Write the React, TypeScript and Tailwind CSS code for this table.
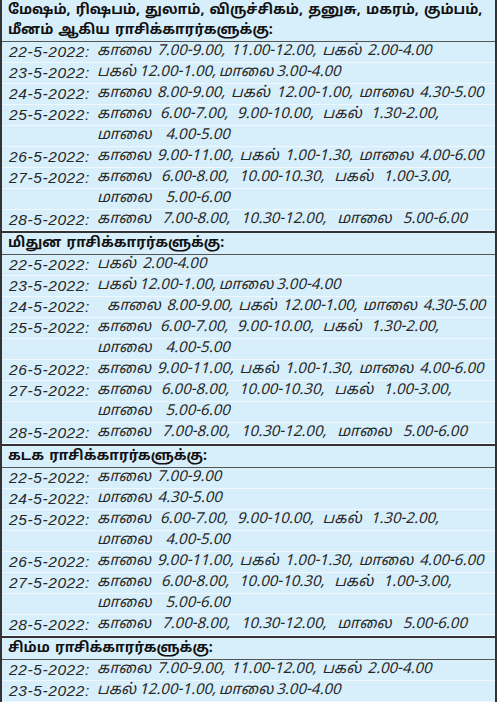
const groups = [
  {
    title: ['மேஷம், ரிஷபம், துலாம், விருச்சிகம், தனுசு, மகரம், கும்பம்,', 'மீனம் ஆகிய ராசிக்காரர்களுக்கு:'],
    rows: [
      { date: '22-5-2022:', lines: ['காலை 7.00-9.00, 11.00-12.00, பகல் 2.00-4.00'] },
      { date: '23-5-2022:', lines: ['பகல் 12.00-1.00, மாலை 3.00-4.00'] },
      { date: '24-5-2022:', lines: ['காலை 8.00-9.00, பகல் 12.00-1.00, மாலை 4.30-5.00'] },
      { date: '25-5-2022:', lines: ['காலை 6.00-7.00, 9.00-10.00, பகல் 1.30-2.00,', 'மாலை 4.00-5.00'] },
      { date: '26-5-2022:', lines: ['காலை 9.00-11.00, பகல் 1.00-1.30, மாலை 4.00-6.00'] },
      { date: '27-5-2022:', lines: ['காலை 6.00-8.00, 10.00-10.30, பகல் 1.00-3.00,', 'மாலை 5.00-6.00'] },
      { date: '28-5-2022:', lines: ['காலை 7.00-8.00, 10.30-12.00, மாலை 5.00-6.00'] },
    ],
  },
  {
    title: ['மிதுன ராசிக்காரர்களுக்கு:'],
    rows: [
      { date: '22-5-2022:', lines: ['பகல் 2.00-4.00'] },
      { date: '23-5-2022:', lines: ['பகல் 12.00-1.00, மாலை 3.00-4.00'] },
      { date: '24-5-2022:', lines: ['காலை 8.00-9.00, பகல் 12.00-1.00, மாலை 4.30-5.00'], wide: true },
      { date: '25-5-2022:', lines: ['காலை 6.00-7.00, 9.00-10.00, பகல் 1.30-2.00,', 'மாலை 4.00-5.00'] },
      { date: '26-5-2022:', lines: ['காலை 9.00-11.00, பகல் 1.00-1.30, மாலை 4.00-6.00'] },
      { date: '27-5-2022:', lines: ['காலை 6.00-8.00, 10.00-10.30, பகல் 1.00-3.00,', 'மாலை 5.00-6.00'] },
      { date: '28-5-2022:', lines: ['காலை 7.00-8.00, 10.30-12.00, மாலை 5.00-6.00'] },
    ],
  },
  {
    title: ['கடக ராசிக்காரர்களுக்கு:'],
    rows: [
      { date: '22-5-2022:', lines: ['காலை 7.00-9.00'] },
      { date: '24-5-2022:', lines: ['மாலை 4.30-5.00'] },
      { date: '25-5-2022:', lines: ['காலை 6.00-7.00, 9.00-10.00, பகல் 1.30-2.00,', 'மாலை 4.00-5.00'] },
      { date: '26-5-2022:', lines: ['காலை 9.00-11.00, பகல் 1.00-1.30, மாலை 4.00-6.00'] },
      { date: '27-5-2022:', lines: ['காலை 6.00-8.00, 10.00-10.30, பகல் 1.00-3.00,', 'மாலை 5.00-6.00'] },
      { date: '28-5-2022:', lines: ['காலை 7.00-8.00, 10.30-12.00, மாலை 5.00-6.00'] },
    ],
  },
  {
    title: ['சிம்ம ராசிக்காரர்களுக்கு:'],
    rows: [
      { date: '22-5-2022:', lines: ['காலை 7.00-9.00, 11.00-12.00, பகல் 2.00-4.00'] },
      { date: '23-5-2022:', lines: ['பகல் 12.00-1.00, மாலை 3.00-4.00'] },
    ],
  },
]

// the print is loosely justified, so some lines carry wider gaps
const spacing: Record<string, string> = {
  'பகல் 12.00-1.00, மாலை 3.00-4.00': '[word-spacing:-1px]',
  'காலை 6.00-7.00, 9.00-10.00, பகல் 1.30-2.00,': '[word-spacing:5px]',
  'காலை 6.00-8.00, 10.00-10.30, பகல் 1.00-3.00,': '[word-spacing:6px]',
  'காலை 7.00-8.00, 10.30-12.00, மாலை 5.00-6.00': '[word-spacing:7px]',
  'மாலை 4.00-5.00': '[word-spacing:10px]',
  'மாலை 5.00-6.00': '[word-spacing:10px]',
}

const tamil = '"Noto Sans Tamil", "Lohit Tamil", "Noto Sans", sans-serif'

export default function App() {
  return (
    <div className="w-[500px] h-[702px] overflow-hidden bg-white">
      <div className="w-[497px] border-l-2 border-r-2 border-[#333] bg-[#d7eefb] text-[#262626]" style={{ fontFamily: tamil }}>
        {groups.map((group, gi) => (
          <div key={gi} className={gi > 0 ? 'border-t-2 border-[#333]' : ''}>
            {/* group header */}
            <div className="px-[6px] pt-[1px] border-b border-[#555]">
              {group.title.map((t) => (
                <div
                  key={t}
                  className="h-[20px] text-[14px] font-bold leading-[20px] text-[#111] whitespace-nowrap [word-spacing:1.5px]"
                >
                  {t}
                </div>
              ))}
            </div>

            {/* rows */}
            {group.rows.map((row) => (
              <div key={row.date + row.lines[0]}>
                {row.lines.map((line, li) => (
                  <div
                    key={li}
                    className="flex h-[21px] items-center border-b border-white/60 pl-[7px] italic text-[15px] whitespace-nowrap [word-spacing:2px]"
                  >
                    <span
                      className="w-[88px] shrink-0 text-[15.5px] tracking-[0.6px] [word-spacing:0px]"
                      style={{ fontFamily: '"Liberation Sans", sans-serif' }}
                    >
                      {li === 0 ? row.date : ''}
                    </span>
                    <span className={(row.wide ? 'pl-[10px] tracking-[-0.2px] ' : '') + (spacing[line] ?? '')}>{line}</span>
                  </div>
                ))}
              </div>
            ))}
          </div>
        ))}
      </div>
    </div>
  )
}
